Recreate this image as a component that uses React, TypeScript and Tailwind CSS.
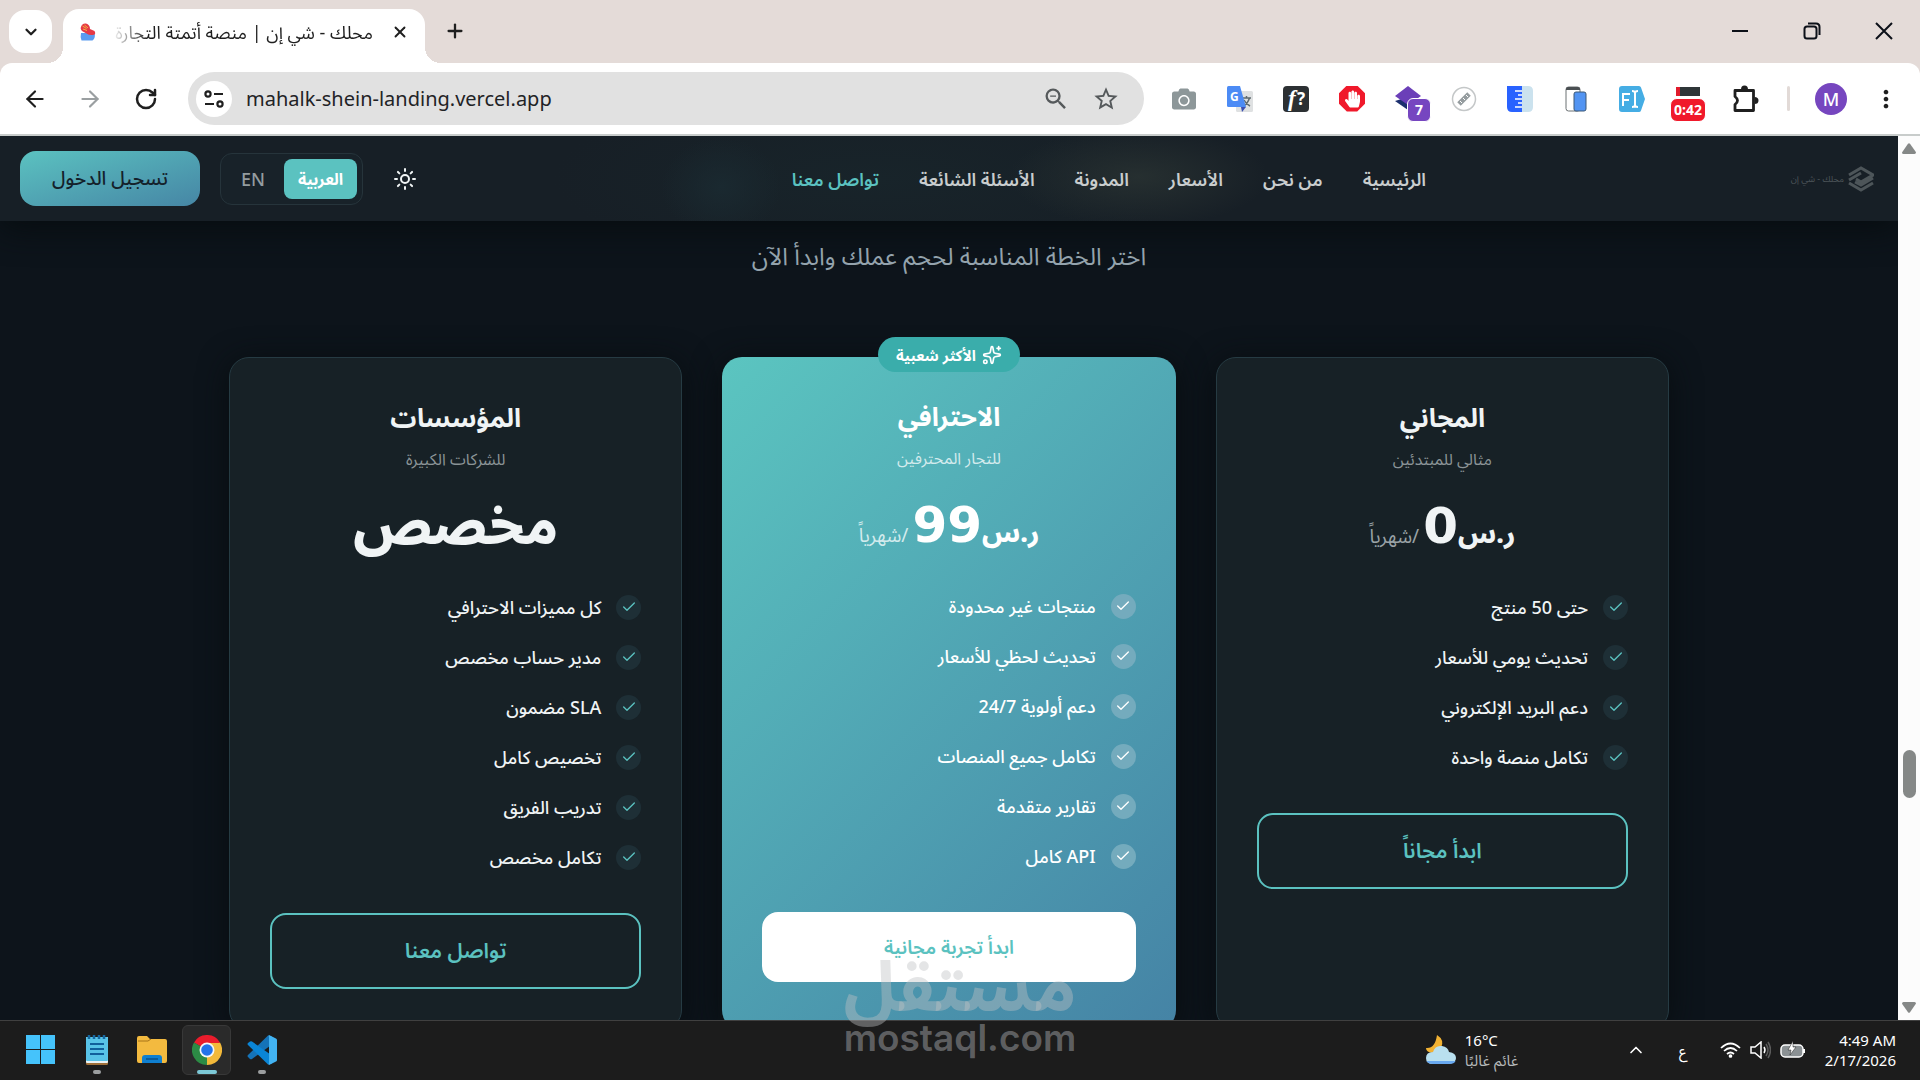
import { ArrowLeft, ArrowRight, Check, ChevronDown, ChevronUp, Plus, RotateCw, Sparkles, Sun, X } from 'lucide-react';
import { MdMoreVert, MdStarBorder, MdZoomOut } from 'react-icons/md';
import { FaCamera, FaHandPaper } from 'react-icons/fa';

const navLinks = [
  { label: 'الرئيسية', active: false },
  { label: 'من نحن', active: false },
  { label: 'الأسعار', active: false },
  { label: 'المدونة', active: false },
  { label: 'الأسئلة الشائعة', active: false },
  { label: 'تواصل معنا', active: true },
];

const plans = [
  {
    id: 'free',
    name: 'المجاني',
    description: 'مثالي للمبتدئين',
    price: '0',
    features: ['حتى 50 منتج', 'تحديث يومي للأسعار', 'دعم البريد الإلكتروني', 'تكامل منصة واحدة'],
    cta: 'ابدأ مجاناً',
    popular: false,
  },
  {
    id: 'pro',
    name: 'الاحترافي',
    description: 'للتجار المحترفين',
    price: '99',
    features: [
      'منتجات غير محدودة',
      'تحديث لحظي للأسعار',
      'دعم أولوية 24/7',
      'تكامل جميع المنصات',
      'تقارير متقدمة',
      'API كامل',
    ],
    cta: 'ابدأ تجربة مجانية',
    popular: true,
  },
  {
    id: 'enterprise',
    name: 'المؤسسات',
    description: 'للشركات الكبيرة',
    price: null,
    features: [
      'كل مميزات الاحترافي',
      'مدير حساب مخصص',
      'SLA مضمون',
      'تخصيص كامل',
      'تدريب الفريق',
      'تكامل مخصص',
    ],
    cta: 'تواصل معنا',
    popular: false,
  },
];

type Plan = (typeof plans)[number];

function TabStrip() {
  return (
    <div className="flex h-[63px] shrink-0 items-end bg-[#e4dbd8] pl-[9px]">
      <button aria-label="Search tabs" className="mb-[10px] flex h-[43px] w-[43px] items-center justify-center rounded-2xl bg-white">
        <ChevronDown className="h-[18px] w-[18px] text-[#1f1f1f]" strokeWidth={3} />
      </button>
      <div className="relative ml-[11px] flex h-[54px] w-[362px] items-center rounded-t-2xl bg-white pr-4 pb-2 pl-[17px]">
        <span className="absolute bottom-0 -left-4 h-4 w-4 bg-[radial-gradient(circle_at_0_0,transparent_16px,#fff_16px)]" />
        <span className="absolute -right-4 bottom-0 h-4 w-4 bg-[radial-gradient(circle_at_100%_0,transparent_16px,#fff_16px)]" />
        <svg viewBox="0 0 16 18" className="h-[18px] w-4 shrink-0">
          <path d="M1 10h13.500q1.500 5-2 7.500h-11Q0 14.500 1 10z" fill="#5b9bf0" />
          <path d="M1 4q1-4 5-3.500 4 1 4 5.500l4.500 2q2 3.500-1.500 4-4 .5-6.500-1.500L2 8Q0 6 1 4z" fill="#e63946" />
          <path d="M2.500 3l4 2.500M4.500 2l3.500 3M3 6l4 1.500" stroke="#f5b43c" strokeWidth="1" />
        </svg>
        <p
          dir="rtl"
          className="ml-4 flex-1 overflow-hidden text-lg whitespace-nowrap text-[#1f1f1f] [mask-image:linear-gradient(to_right,transparent,#000_36px)]"
        >
          محلك - شي إن | منصة أتمتة التجارة
        </p>
        <button aria-label="Close tab" className="ml-[18px]">
          <X className="h-[18px] w-[18px] text-[#1f1f1f]" strokeWidth={2.500} />
        </button>
      </div>
      <button aria-label="New tab" className="mb-[21px] ml-[19px]">
        <Plus className="h-[22px] w-[22px] text-[#1f1f1f]" strokeWidth={2.500} />
      </button>
      <div className="ml-auto flex items-center gap-[54px] pr-[27px] pb-[23px] text-[#0c1018]">
        <button aria-label="Minimize">
          <svg viewBox="0 0 18 18" className="h-[18px] w-[18px]" stroke="currentColor" strokeWidth="2">
            <path d="M1 9h16" />
          </svg>
        </button>
        <button aria-label="Restore">
          <svg viewBox="0 0 18 18" className="h-[18px] w-[18px]" fill="none" stroke="currentColor" strokeWidth="2">
            <rect x="1.500" y="4.500" width="12" height="12" rx="2.500" />
            <path d="M5 1.500h8q3.500 0 3.500 3.500v8" />
          </svg>
        </button>
        <button aria-label="Close">
          <svg viewBox="0 0 18 18" className="h-[18px] w-[18px]" stroke="currentColor" strokeWidth="2">
            <path d="M1 1l16 16M17 1L1 17" />
          </svg>
        </button>
      </div>
    </div>
  );
}

function Extensions() {
  return (
    <div className="ml-[27px] flex items-center gap-[30px]">
      <FaCamera className="h-[24px] w-[26px] text-[#8d9799]" />
      <svg viewBox="0 0 26 26" className="h-[26px] w-[26px]">
        <rect x="9" y="5" width="17" height="21" rx="1.500" fill="#dfe1e2" />
        <path d="M15 12h9M19.500 10v2M22.500 12q-2 6-6 8M17 14q2 4 6 6" stroke="#5f6b70" strokeWidth="1.500" fill="none" />
        <path d="M14 21h5l-4 5z" fill="#3b4fb0" />
        <path d="M1.500 0H13l6 21H1.500Q0 21 0 19.500v-18Q0 0 1.500 0z" fill="#4c8bf5" />
        <text x="3" y="15" fontSize="12" fontWeight="700" fill="#fff">G</text>
      </svg>
      <svg viewBox="0 0 26 26" className="h-[26px] w-[26px]">
        <rect width="26" height="26" rx="4" fill="#2c3033" />
        <text x="5" y="20" fontSize="23" fontStyle="italic" fontWeight="700" fill="#fff" fontFamily="Liberation Serif, serif">f</text>
        <text x="14" y="19" fontSize="17" fontWeight="700" fill="#fff">?</text>
      </svg>
      <div className="flex h-[26px] w-[26px] items-center justify-center bg-[#f0192b] [clip-path:polygon(30%_0,70%_0,100%_30%,100%_70%,70%_100%,30%_100%,0_70%,0_30%)]">
        <FaHandPaper className="h-[18px] w-[15px] text-white" />
      </div>
      <div className="relative h-[26px] w-[26px]">
        <svg viewBox="0 0 26 26" className="h-[26px] w-[26px]">
          <path d="M0 15l13 9 10-7-10-6z" fill="#1c2f6e" />
          <path d="M13 0l13 10-13 9L0 10z" fill="#6b3fb8" />
        </svg>
        <span className="absolute top-[12px] left-[12px] flex h-[24px] w-[24px] items-center justify-center rounded-[6px] border border-white bg-[#7646c0] text-sm font-bold text-white">
          7
        </span>
      </div>
      <svg viewBox="0 0 26 26" className="h-[26px] w-[26px]">
        <circle cx="13" cy="13" r="11.500" fill="#fff" stroke="#c4c7c8" strokeWidth="1.500" />
        <path d="M8 18L18 8" stroke="#959c9f" strokeWidth="5" />
        <path d="M9 15l2 2M12 12l2 2M15 9l2 2" stroke="#fff" />
      </svg>
      <svg viewBox="0 0 26 26" className="h-[26px] w-[26px]">
        <path d="M13 0h8q5 0 5 5v16q0 5-5 5h-8z" fill="#cbe2ee" />
        <path d="M0 0h15v26H5q-5 0-5-5z" fill="#2962ff" />
        <path d="M8 5h7M11 9h4M8 13h7M11 17h4M8 21h7" stroke="#fff" strokeWidth="1.500" />
      </svg>
      <svg viewBox="0 0 26 26" className="h-[26px] w-[26px]">
        <rect x="3" y="1" width="14" height="24" rx="2.500" fill="#fff" stroke="#6a7073" />
        <path d="M3 4V3q0-2 2-2h10q2 0 2 2v1z" fill="#4a4f52" />
        <rect x="11" y="6" width="12" height="19" rx="2" fill="#5294f2" stroke="#3c5876" />
      </svg>
      <svg viewBox="0 0 26 26" className="h-[26px] w-[26px]">
        <path d="M3 0h17q1.500 0 2 1.500L26 13l-4 11.500q-.5 1.500-2 1.500H3q-3 0-3-3V3q0-3 3-3z" fill="#45ade4" />
        <path d="M4 20V8h7M4 14h6M13 5q3 0 3 2v12q0 2-3 2M19 5q-3 0-3 2M19 21q-3 0-3-2" fill="none" stroke="#fff" strokeWidth="2" />
      </svg>
      <div className="relative h-[26px] w-[26px]">
        <div className="mt-px ml-px h-[9px] w-6 border-l-4 border-[#e01b2c] bg-[#2f3538]" />
        <span className="absolute top-[12px] -left-[5px] flex h-[24px] w-[36px] items-center justify-center rounded-[7px] border border-white bg-[#f0192b] text-sm font-bold text-white">
          0:42
        </span>
      </div>
      <svg viewBox="0 0 28 28" className="h-[28px] w-[28px]">
        <path
          d="M4 5.500h18.500v20H4v-6q5-4 0-8z"
          fill="none"
          stroke="#1f1f1f"
          strokeWidth="2.800"
          strokeLinejoin="round"
        />
        <path d="M10 4.500q0-4 3.500-4t3.500 4zM23.500 12q4 0 4 3.500t-4 3.500z" fill="#1f1f1f" />
      </svg>
    </div>
  );
}

function Toolbar() {
  return (
    <div className="bg-[#e4dbd8]">
      <div className="flex h-[73px] shrink-0 items-center rounded-t-xl border-b-2 border-[#c8cccb] bg-white pr-5 pl-[22px] text-[#1f1f1f]">
        <div className="flex items-center gap-[29px]">
          <button aria-label="Back">
            <ArrowLeft className="h-[26px] w-[26px]" />
          </button>
          <button aria-label="Forward" className="text-[#9a9fa1]">
            <ArrowRight className="h-[26px] w-[26px]" />
          </button>
          <button aria-label="Reload">
            <RotateCw className="h-[24px] w-[28px]" strokeWidth={2.500} />
          </button>
        </div>
        <div className="ml-7 flex h-[53px] flex-1 items-center rounded-full bg-[#e1e1e1] pr-6 pl-2">
          <button aria-label="View site information" className="flex h-9 w-9 items-center justify-center rounded-full bg-white">
            <svg viewBox="0 0 20 20" className="h-5 w-5" fill="none" stroke="#1f1f1f" strokeWidth="2.200">
              <circle cx="4" cy="5" r="2.600" />
              <path d="M10 5h9M1 15h9" />
              <circle cx="16" cy="15" r="2.600" />
            </svg>
          </button>
          <input
            aria-label="Address"
            readOnly
            value="mahalk-shein-landing.vercel.app"
            className="ml-[14px] min-w-0 flex-1 bg-transparent text-xl text-[#1f2326] outline-none"
          />
          <MdZoomOut className="h-7 w-7 text-[#55595b]" />
          <MdStarBorder className="ml-[22px] h-7 w-7 text-[#55595b]" />
        </div>
        <Extensions />
        <span className="ml-[28px] h-[25px] w-[3px] rounded-full bg-[#e2dad7]" />
        <button aria-label="Profile" className="ml-[25px] flex h-8 w-8 items-center justify-center rounded-full bg-[#7646bf] text-lg font-medium text-white">
          M
        </button>
        <button aria-label="Menu" className="ml-[25px]">
          <MdMoreVert className="h-[28px] w-[28px]" />
        </button>
      </div>
    </div>
  );
}

function SiteHeader() {
  return (
    <header className="flex h-[85px] shrink-0 items-center justify-between bg-[#171f26] bg-[radial-gradient(ellipse_130px_50px_at_60%_48%,#262f30,transparent),radial-gradient(ellipse_60px_50px_at_38%_60%,#1a2930,transparent),radial-gradient(ellipse_320px_90px_at_46%_50%,#18242a,transparent)] pr-6 pl-5 shadow-[0_8px_32px_#070d10]">
      <a href="#home" className="flex items-center gap-1 text-[#4d5559]">
        <svg viewBox="0 0 26 26" className="h-[26px] w-[26px]" fill="none" stroke="currentColor" strokeWidth="3">
          <path d="M1 9l12-7 12 7-12 7-5-3M1 17l12 7 12-7M1 14l12-7M25 12l-12 7-6-3" />
        </svg>
        <span className="text-[9px]">محلك - شي إن</span>
      </a>
      <nav className="flex items-center gap-10 text-lg font-semibold">
        {navLinks.map((link) => (
          <a key={link.label} href="#section" className={link.active ? 'text-[#5bc2c0]' : 'text-[#c9cdce]'}>
            {link.label}
          </a>
        ))}
      </nav>
      <div className="flex items-center gap-5">
        <button aria-label="تبديل المظهر" className="flex h-11 w-11 items-center justify-center text-[#f0f4f5]">
          <Sun className="h-6 w-6" />
        </button>
        <div className="flex h-[52px] w-[143px] items-center rounded-xl border border-[#26343b] bg-[#182229] px-[5px]">
          <button className="h-10 w-[73px] rounded-lg bg-[#5bc2c0] text-base font-bold text-white">العربية</button>
          <button className="flex-1 pr-1 text-lg leading-6 font-medium text-[#949c9f]">EN</button>
        </div>
        <button className="h-[55px] w-[180px] rounded-2xl bg-linear-to-br from-[#5bc2c0] to-[#4686a5] text-[19px] font-medium text-[#14212a]">
          تسجيل الدخول
        </button>
      </div>
    </header>
  );
}

function PlanCard({ plan }: { plan: Plan }) {
  return (
    <article
      className={`relative rounded-[20px] px-10 pt-[39px] pb-10 shadow-[0_4px_30px_#080d10] ${
        plan.popular
          ? 'bg-linear-135 from-[#5bc5c0] to-[#4583a5] text-white'
          : 'border border-[#263b43] bg-[#172126] text-[#f0f4f5]'
      }`}
    >
      {plan.popular && (
        <div className="absolute -top-5 left-1/2 flex h-[35px] w-[142px] -translate-x-1/2 items-center justify-center gap-[6px] rounded-full bg-[#3aadab] text-[15px] leading-5 font-bold whitespace-nowrap text-white">
          <Sparkles className="h-5 w-5" />
          الأكثر شعبية
        </div>
      )}

      <div className="text-center">
        <h3 className="h-10 text-[26px] leading-10 font-bold">{plan.name}</h3>
        <p className={`mt-2 text-base leading-7 ${plan.popular ? 'text-[#d3ebed]' : 'text-[#8b9497]'}`}>{plan.description}</p>
        {/* Price */}
        <div className="h-[119px] font-extrabold">
          {plan.price === null ? (
            <p className="text-[54px] leading-[100px]">مخصص</p>
          ) : (
            <p className="flex items-baseline justify-center leading-[106px]">
              <span className="text-[27px]">ر.س</span>
              <span className="font-['DejaVu_Sans',sans-serif] text-[50px]">{plan.price}</span>
              <span className={`mr-1 text-[19px] font-normal ${plan.popular ? 'text-[#d3ebed]' : 'text-[#9aa3a6]'}`}>
                /شهرياً
              </span>
            </p>
          )}
        </div>
      </div>

      {/* Features */}
      <ul className="flex flex-col gap-5">
        {plan.features.map((feature) => (
          <li key={feature} className="flex h-[30px] items-center gap-[15px] text-lg font-medium">
            <span
              className={`flex h-[25px] w-[25px] items-center justify-center rounded-full ${
                plan.popular ? 'bg-[#74abbd] text-white' : 'bg-[#1e2f36] text-[#5bc2c0]'
              }`}
            >
              <Check className="h-4 w-4" />
            </span>
            {feature}
          </li>
        ))}
      </ul>

      <button
        className={`mt-[41px] w-full rounded-2xl font-semibold ${
          plan.popular
            ? 'h-[70px] bg-white text-[19px] text-[#5bc2c0]'
            : 'h-[76px] border-2 border-[#5bc2c0] text-[21px] text-[#5bc2c0]'
        }`}
      >
        {plan.cta}
      </button>
    </article>
  );
}

function Scrollbar() {
  return (
    <div className="flex w-[22px] shrink-0 flex-col items-center justify-between bg-[#fcfcfc] py-[7px]">
      <svg viewBox="0 0 14 11" className="h-[11px] w-[14px]" fill="#858887">
        <path d="M6 .8q1-1 2 0l6 8.500q0 1.500-1.500 1.700h-11Q0 11 0 9.500z" />
      </svg>
      <div className="flex flex-1 flex-col items-center">
        <span className="flex-[597]" />
        <span className="h-12 w-[13px] rounded-full bg-[#858887]" />
        <span className="flex-[204]" />
      </div>
      <svg viewBox="0 0 14 11" className="h-[11px] w-[14px] rotate-180" fill="#858887">
        <path d="M6 .8q1-1 2 0l6 8.500q0 1.500-1.500 1.700h-11Q0 11 0 9.500z" />
      </svg>
    </div>
  );
}

function Taskbar() {
  return (
    <footer className="flex h-[60px] shrink-0 items-center border-t border-[#404040] bg-[#1c1c1c] pr-6 pb-[2px] pl-4 text-[15px] leading-5 text-white">
      <button aria-label="Start" className="flex h-[49px] w-[49px] items-center justify-center">
        <svg viewBox="0 0 29 29" className="h-[29px] w-[29px]" fill="#45c3fb">
          <path d="M0 0h14v14H0zM15 0h14v14H15zM0 15h14v14H0zM15 15h14v14H15z" />
        </svg>
      </button>
      <button aria-label="Notepad" className="ml-[7px] flex h-[49px] w-[49px] flex-col items-center justify-end">
        <svg viewBox="0 0 22 30" className="h-[30px] w-[22px]">
          <rect y="2" width="22" height="28" rx="1.500" fill="#a0703a" />
          <rect y="2" width="22" height="26" rx="1" fill="#e9f3f6" />
          <rect y="2" width="22" height="24" rx="1" fill="#58c3e8" />
          <path d="M3 0v4M8 0v4M13 0v4M18 0v4" stroke="#1667a0" strokeWidth="2.500" />
          <path d="M4 9h14M4 14h14M4 19h14" stroke="#115f9c" strokeWidth="2" />
        </svg>
        <span className="mt-[5px] h-1 w-2 rounded-full bg-[#9b9e9f]" />
      </button>
      <button aria-label="File Explorer" className="ml-[6px] flex h-[49px] w-[49px] items-center justify-center">
        <svg viewBox="0 0 30 27" className="h-[27px] w-[30px]">
          <path d="M0 2q0-2 2-2h8l3 3h15q2 0 2 2v20q0 2-2 2H2q-2 0-2-2z" fill="#f3ba3f" />
          <path d="M1 5h10l3-2" stroke="#a87419" fill="none" />
          <path d="M5 27v-5q0-3 3-3h14q3 0 3 3v5z" fill="#0f7fd0" />
          <path d="M9 23h12" stroke="#0a4f8a" strokeWidth="1.500" />
        </svg>
      </button>
      <button aria-label="Google Chrome" className="ml-[6px] flex h-[50px] w-[49px] flex-col items-center justify-end rounded-md border border-[#383838] bg-[#2a2a2a]">
        <svg viewBox="0 0 30 30" className="h-[30px] w-[30px]">
          <path d="M15 15L2 7.500A15 15 0 0 1 28 7.500z" fill="#ea1c2c" />
          <path d="M15 15L28 7.500A15 15 0 0 1 15 30z" fill="#f3b93a" />
          <path d="M15 15L15 30A15 15 0 0 1 2 7.500z" fill="#2c8b45" />
          <path d="M15 8h13.300l-7 11.500L15 30l3-9z" fill="#f3b93a" />
          <circle cx="15" cy="15" r="7.500" fill="#f5f7f8" />
          <circle cx="15" cy="15" r="5.800" fill="#2373ea" />
        </svg>
        <span className="mt-[5px] h-1 w-5 rounded-full bg-[#7cc8d6]" />
      </button>
      <button aria-label="Visual Studio Code" className="ml-[6px] flex h-[49px] w-[49px] flex-col items-center justify-end">
        <svg viewBox="0 0 30 30" className="h-[30px] w-[30px]">
          <path d="M1 20l20-19.500 4 1v8L5 24q-1 .5-2 0l-2-2q-1-1 0-2z" fill="#1573b8" />
          <path d="M1 10l20 19.500 4-1v-8L5 6.500q-1-.5-2 0l-2 1.500q-1 1 0 2z" fill="#0a85d6" />
          <path d="M22 0q-1 .5 0 2v26q-1 1.500 0 2l7-3.500q1-.5 1-1.500V5q0-1-1-1.500z" fill="#42b3f2" />
        </svg>
        <span className="mt-[5px] h-1 w-2 rounded-full bg-[#9b9e9f]" />
      </button>

      {/* Weather */}
      <svg viewBox="0 0 30 30" className="ml-auto h-[30px] w-[30px]">
        <path d="M11 0q8 5 4 13l-9 5q-6-1-6-5 9 1 11-13z" fill="#f2b233" />
        <path d="M7 29q-7 0-7-6t7-6q2-7 9-6 6 1 7 6 7 1 7 6t-7 6z" fill="#b9e0ef" />
        <path d="M7 29q-5 0-6.500-3h29q-1 3-6.500 3z" fill="#68a8ef" />
      </svg>
      <div className="ml-[9px] w-[161px]">
        <p>16°C</p>
        <p dir="rtl" className="w-fit text-[#b5b8b9]">غائم غالبًا</p>
      </div>
      <ChevronUp className="h-5 w-5" />
      <span className="ml-[32px] w-[10px] text-center">ع</span>
      <div className="ml-[32px] flex items-center gap-[9px]">
        <svg viewBox="0 0 21 16" className="h-4 w-[21px]" fill="none" stroke="#fff" strokeWidth="1.700">
          <path d="M1 6q9.500-9 19 0M4 9q6.500-6 13 0M7 12q3.500-3 7 0" />
          <circle cx="10.500" cy="14" r="1" fill="#fff" />
        </svg>
        <svg viewBox="0 0 21 18" className="h-[18px] w-[21px]" fill="none" stroke="#fff" strokeWidth="1.500">
          <path d="M1 6h4l6-5v16l-6-5H1z" />
          <path d="M14 6q2 3 0 6" />
          <path d="M16 3q4 6 0 12M18 1q5 8 0 16" stroke="#5c5c5c" />
        </svg>
        <svg viewBox="0 0 25 18" className="h-[18px] w-[25px]">
          <rect x="1" y="4" width="22" height="12" rx="4" fill="#8b9194" stroke="#fff" strokeWidth="1.500" />
          <path d="M24 8v4" stroke="#fff" strokeWidth="2" />
          <path d="M13 0l-5 9h3l-1 5 6-8h-3z" fill="#fff" stroke="#1c1c1c" strokeWidth=".5" />
        </svg>
      </div>
      <div className="ml-5 text-right">
        <p>4:49 AM</p>
        <p>2/17/2026</p>
      </div>
    </footer>
  );
}

export default function App() {
  return (
    <div className="relative flex h-screen flex-col overflow-hidden bg-[#0d141b] font-['Noto_Sans','Noto_Sans_Arabic','DejaVu_Sans',sans-serif]">
      <TabStrip />
      <Toolbar />
      <div className="flex min-h-0 flex-1">
        <main dir="rtl" className="flex min-w-0 flex-1 flex-col overflow-hidden">
          <SiteHeader />
          <section className="mx-auto w-full max-w-[1440px] pt-[15px]">
            <h2 className="h-10 text-center text-2xl leading-10 text-[#94a3ad]">اختر الخطة المناسبة لحجم عملك وابدأ الآن</h2>
            <div className="mt-[81px] grid grid-cols-3 gap-10">
              {plans.map((plan) => (
                <PlanCard key={plan.id} plan={plan} />
              ))}
            </div>
          </section>
        </main>
        <Scrollbar />
      </div>
      <Taskbar />

      {/* Watermark */}
      <div className="pointer-events-none absolute inset-x-0 bottom-0 flex flex-col items-center text-[#bec0c4]/42">
        <span dir="rtl" className="h-[69px] text-[70px] leading-[70px] font-bold">مستقل</span>
        <span className="h-[62px] font-['Inter',sans-serif] text-[37px] leading-10 font-semibold">mostaql.com</span>
      </div>
    </div>
  );
}
